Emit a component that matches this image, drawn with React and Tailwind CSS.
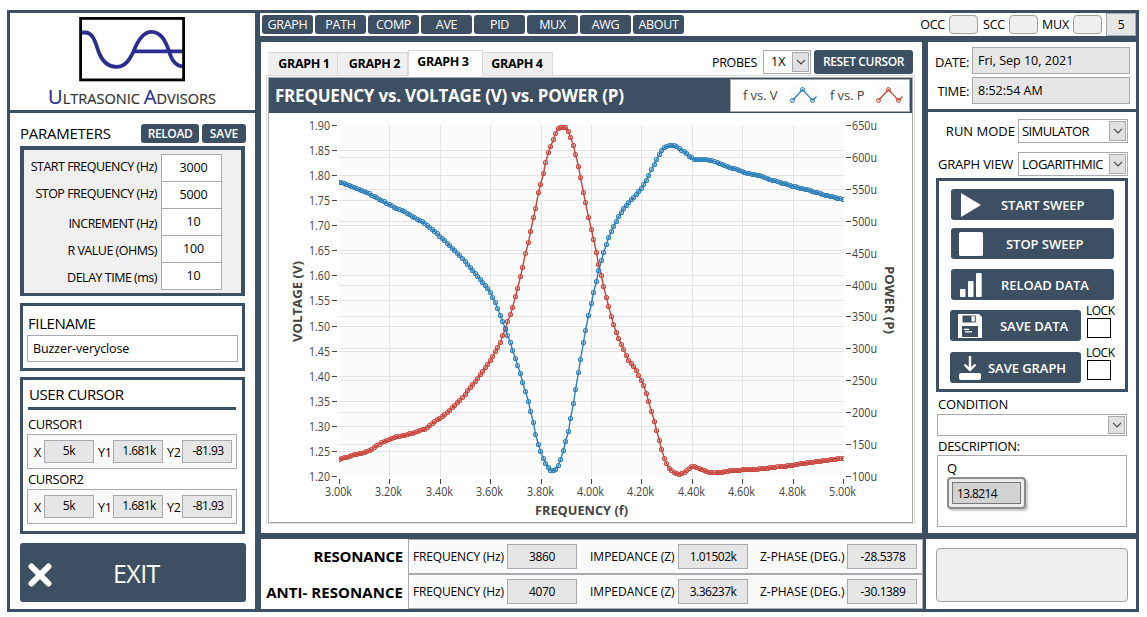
import React, { useState } from 'react';

const BLUE = '#2f80b8';
const RED = '#c9483f';

// Curve outlines in chart coordinates, resampled every 10 Hz below
const voltageCurve = [
  [339, 182], [350, 186], [367, 192.5], [381, 200], [390, 205], [403, 211], [415, 218], [424, 223],
  [433, 230], [447, 243], [460, 256], [470, 267], [480, 279], [490, 292], [497, 306], [505, 328],
  [511, 344], [516, 360], [520, 372], [528, 401], [533, 422], [536.7, 440], [541, 453], [545, 463], [549, 469],
  [552, 471], [556, 469], [560, 462], [563, 452], [566, 441], [568.7, 430], [571.3, 416], [573.7, 402],
  [576.3, 387], [578.5, 372], [581.5, 356], [583.5, 342], [586.5, 328], [588.5, 315], [591.5, 301],
  [594.3, 289], [596.5, 279], [599.3, 268], [601.5, 259], [604.3, 251], [606.5, 243], [609.3, 236],
  [612, 230], [617, 220], [622, 211], [627, 204], [632, 199], [641, 189.5], [646, 181], [651, 171],
  [656, 160], [660, 152.5], [664, 148], [669, 145.3], [674, 145.3], [680, 149], [686, 153], [690, 157],
  [694, 159], [706, 159], [718, 163], [732, 168], [745, 172.5], [760, 176], [775, 181], [792, 186],
  [812, 191], [825, 195], [843, 199.5],
];

const powerCurve = [
  [339, 459.5], [350, 456], [362, 453], [371, 449.5], [381, 443], [392, 438], [405, 435], [415, 432.5],
  [425, 429], [430, 425], [440, 418], [450, 410], [460, 400], [470, 388], [480, 375], [490, 361],
  [500, 343], [505, 330], [510, 315], [513.5, 306], [515.5, 296], [518.5, 287], [520.5, 276.5],
  [523.5, 265.5], [525.5, 253], [528.3, 241], [531.5, 228], [533.3, 216], [536.7, 204], [538, 192.5],
  [541.5, 181.5], [543.7, 170.5], [546, 161.5], [548, 152.5], [551.5, 144.5], [553.7, 138.5], [556, 132.5],
  [558.5, 128.5], [561, 127], [563.5, 127], [566, 128], [568.5, 132], [571.5, 139], [573.7, 146.5],
  [576.3, 156.3], [578.5, 167.5], [581.3, 179], [583.5, 192.5], [586.5, 204.5], [588.5, 217.5],
  [591.5, 231.5], [594.5, 243.5], [596.5, 255.5], [599.5, 268], [601.5, 278], [604.3, 289], [606.5, 299.5],
  [609.5, 309.5], [611.5, 318], [614.5, 326.5], [616.5, 333.5], [619.5, 340.5], [626.5, 355.5],
  [629.5, 361.5], [634.5, 367.5], [639.5, 376.5], [644.5, 386.5], [649.5, 403.5], [651.5, 411.5],
  [654.5, 423.5], [657.5, 434.5], [662.5, 452.5], [664.5, 459.5], [668.5, 467.5], [673.5, 472.5],
  [678.5, 474.5], [683.5, 472.5], [687.5, 470], [692, 466.3], [696, 466.5], [700, 469], [705, 471],
  [708.5, 472], [723.5, 472], [732, 470.5], [758.5, 469], [773.5, 467.5], [793, 465], [817, 461.5], [843, 458],
];

const resample = (curve) => {
  const points = [];
  let seg = 0;
  for (let i = 0; i <= 200; i++) {
    const x = 339 + i * 2.52;
    while (seg < curve.length - 2 && curve[seg + 1][0] < x) seg++;
    const [x0, y0] = curve[seg];
    const [x1, y1] = curve[seg + 1];
    const y = y0 + ((x - x0) / (x1 - x0)) * (y1 - y0);
    points.push([Math.floor(x) + 0.5, Math.floor(y) + 0.5]);
  }
  return points;
};

const Trace = ({ curve, color }) => {
  const points = resample(curve);
  return (
    <g fill="none" stroke={color} clipPath="url(#plot)">
      <polyline points={points.map((p) => p.join(',')).join(' ')} strokeWidth="1.4" />
      {points.map(([x, y], i) => (
        <circle key={i} cx={x} cy={y} r="2" strokeWidth="1.2" />
      ))}
    </g>
  );
};

const Chart = () => {
  const volts = Array.from({ length: 15 }, (_, i) => (1.9 - i * 0.05).toFixed(2));
  const powers = Array.from({ length: 12 }, (_, i) => `${650 - i * 50}u`);
  const freqs = Array.from({ length: 11 }, (_, i) => `${(3 + i * 0.2).toFixed(2)}k`);
  const voltY = (i) => Math.round(125 + i * 25.07) + 0.5;
  const powerY = (i) => Math.round(125 + i * 31.9) + 0.5;
  const freqX = (i) => Math.round(339 + i * 50.4) + 0.5;

  return (
    <svg width="642" height="408" viewBox="269 113 642 408" fontFamily="'Open Sans', sans-serif" fontSize="12" fill="#444">
      <clipPath id="plot">
        <rect x="339" y="125" width="505" height="352" />
      </clipPath>
      <rect x="339" y="125" width="505" height="352" fill="#fcfcfc" />
      <g stroke="#e4e4e4">
        {volts.map((v, i) => i > 0 && i < 14 && <line key={v} x1="339" x2="844" y1={voltY(i)} y2={voltY(i)} />)}
        {powers.map((v, i) => i > 0 && i < 11 && <line key={v} x1="339" x2="844" y1={powerY(i)} y2={powerY(i)} />)}
        {freqs.map((v, i) => i > 0 && i < 10 && <line key={v} y1="125" y2="477" x1={freqX(i)} x2={freqX(i)} />)}
      </g>
      <g stroke="#444">
        {volts.map((v, i) => <line key={v} x1="332" x2="337" y1={voltY(i)} y2={voltY(i)} />)}
        {powers.map((v, i) => <line key={v} x1="846" x2="851" y1={powerY(i)} y2={powerY(i)} />)}
        {freqs.map((v, i) => <line key={v} y1="479" y2="484" x1={freqX(i)} x2={freqX(i)} />)}
      </g>
      {volts.map((v, i) => (
        <text key={v} x="309" y={voltY(i) + 4.5} textLength="21" lengthAdjust="spacingAndGlyphs">{v}</text>
      ))}
      {powers.map((v, i) => (
        <text key={v} x="852" y={powerY(i) + 4.5} textLength="25" lengthAdjust="spacingAndGlyphs">{v}</text>
      ))}
      {freqs.map((v, i) => (
        <text key={v} x={freqX(i) - 14.5} y="496" textLength="27" lengthAdjust="spacingAndGlyphs">{v}</text>
      ))}
      <g fontWeight="700" fontSize="13">
        <text x="535" y="515" textLength="93" lengthAdjust="spacingAndGlyphs">FREQUENCY (f)</text>
        <text transform="translate(302 342) rotate(-90)" textLength="81" lengthAdjust="spacingAndGlyphs">VOLTAGE (V)</text>
        <text transform="translate(885 266) rotate(90)" textLength="68" lengthAdjust="spacingAndGlyphs">POWER (P)</text>
      </g>
      <Trace curve={powerCurve} color={RED} />
      <Trace curve={voltageCurve} color={BLUE} />
    </svg>
  );
};

const Logo = () => (
  <svg width="245" height="97" viewBox="10 13 245 97" fontFamily="'Open Sans', sans-serif">
    <g fill="none" stroke="#2b2d8f" strokeWidth="3.8">
      <path d="M82 32.5H85C93 32.5 95 41 98.5 51.5C102 61 108 66.8 116.5 66.8C125 66.8 129.5 60 133.5 51.5C137.5 41 143 31.8 151.5 31.8C161 31.8 165.5 41 169 51C171.5 60 175 66.3 183 66.3" />
      <path d="M133 51.3H183" />
    </g>
    <rect x="80.6" y="18.4" width="103" height="61.5" fill="none" stroke="#000" strokeWidth="2.8" />
    <text x="48" y="103.5" textLength="168" lengthAdjust="spacingAndGlyphs" fontSize="14.5" fill="#333" stroke="#333" strokeWidth="0.2">
      <tspan fontSize="20" fill="#2b2d8f" stroke="#2b2d8f">U</tspan>LTRASONIC <tspan fontSize="20" fill="#2b2d8f" stroke="#2b2d8f">A</tspan>DVISORS
    </text>
  </svg>
);

const LegendMark = ({ color }) => (
  <svg width="28" height="20" viewBox="0 0 28 20" fill="none" stroke={color}>
    <rect width="28" height="20" fill="#fcfcfc" stroke="none" />
    <path d="M2.5 14.5L12.5 3.5L22.5 14.5L26.5 10.5" strokeWidth="1.2" />
    <circle cx="2.5" cy="14.5" r="2" />
    <circle cx="12.5" cy="3.5" r="2" />
    <circle cx="22.5" cy="14.5" r="2" />
  </svg>
);

const Select = ({ value, className }) => (
  <div className={`flex items-center justify-between border border-[#a9a9b0] bg-white py-px pr-px ${className}`}>
    <span className="pt-px">{value}</span>
    <span className="flex h-full w-[17px] shrink-0 items-center justify-center border border-[#a9a9b0] bg-[#e1e1e1]">
      <svg width="10" height="6" viewBox="0 0 10 6" fill="none" stroke="#444" strokeWidth="1.2">
        <path d="M1 .8L5 4.8L9 .8" />
      </svg>
    </span>
  </div>
);

const Field = ({ value, className }) => (
  <div className={`flex items-center justify-center border border-[#a9a9b0] bg-[#e6e6e6] ${className}`}>{value}</div>
);

const btn = 'flex items-center rounded-[3px] bg-[#3d4f63] text-white';

const parameters = [
  { label: 'START FREQUENCY (Hz)', value: '3000', shift: 'pt-0' },
  { label: 'STOP FREQUENCY (Hz)', value: '5000', shift: 'pt-0' },
  { label: 'INCREMENT (Hz)', value: '10', shift: 'pt-[3px]' },
  { label: 'R VALUE (OHMS)', value: '100', shift: 'pt-[3px]' },
  { label: 'DELAY TIME (ms)', value: '10', shift: 'pt-[3px]' },
];

const CursorRow = ({ name, className }) => (
  <div className={className}>
    <div className="ml-px h-5 text-[13px] leading-[20px] tracking-[-0.4px]">{name}</div>
    <div className="flex h-[35px] w-[210px] items-center border border-[#a9a9b0] bg-[#fafafa] text-[12px]">
      <span className="w-4 pt-[3px] pl-1.5 text-[12.5px]">X</span>
      <Field value="5k" className="h-[23px] w-[50px] pb-px tracking-[-0.4px]" />
      <span className="w-[19px] pt-[3px] pl-1 text-[12.5px] tracking-[-0.3px]">Y1</span>
      <Field value="1.681k" className="h-[23px] w-[50px] pb-px pl-0.5 tracking-[-0.6px]" />
      <span className="w-[19px] pt-[3px] pl-1 text-[12.5px] tracking-[-0.3px]">Y2</span>
      <Field value="-81.93" className="h-[23px] w-[50px] pb-px pl-0.5 tracking-[-0.6px]" />
    </div>
  </div>
);

const Sidebar = () => (
  <div className="flex w-[245px] flex-col gap-[3px]">
    <div className="h-[97px] bg-white">
      <Logo />
    </div>
    <div className="h-[496px] bg-white pl-[10px]">
      <div className="flex h-[33px] items-end pb-[3px]">
        <span className="w-[121px] text-[15px] leading-[19px] tracking-[-0.25px]">PARAMETERS</span>
        <button className={`${btn} h-[19px] w-[58px] justify-center pt-px text-[12px] font-semibold tracking-[-0.4px]`}>RELOAD</button>
        <button className={`${btn} ml-[3px] h-[19px] w-11 justify-center pt-px text-[12px] font-semibold tracking-[-0.1px]`}>SAVE</button>
      </div>
      <div className="h-[150px] w-[225px] border-4 border-b-[3px] border-[#3d4f63] bg-[#f0f0f0] pt-1">
        {parameters.map((p) => (
          <div key={p.label} className="flex h-[27px]">
            <span className={`w-[133px] text-right text-[12.5px] leading-[25px] tracking-[-0.5px] whitespace-nowrap ${p.shift}`}>{p.label}</span>
            <span className="ml-1 flex h-7 w-[61px] items-center justify-center border border-[#a9a9b0] bg-white pl-1 text-[12.5px] tracking-[-0.1px]">
              {p.value}
            </span>
          </div>
        ))}
      </div>
      <div className="mt-[7px] h-[68px] w-[225px] border-[3px] border-[#3d4f63] pt-[6px] pl-1">
        <div className="ml-px h-[23px] text-[15px] leading-[23px] tracking-[-0.4px]">FILENAME</div>
        <div className="flex h-[27px] w-[211px] items-center border border-[#a9a9b0] pt-0.5 pl-[5px] text-[12.5px] tracking-[-0.1px]">
          Buzzer-veryclose
        </div>
      </div>
      <div className="mt-[6px] h-[157px] w-[225px] border-[3px] border-[#3d4f63] pl-1">
        <div className="ml-0.5 h-[27px] pt-[3px] text-[15px] leading-[23px] tracking-[-0.45px]">USER CURSOR</div>
        <div className="ml-px h-[3px] w-[208px] bg-[#3d4f63]" />
        <CursorRow name="CURSOR1" className="mt-1" />
        <CursorRow name="CURSOR2" className="" />
      </div>
      <button className={`${btn} mt-[9px] h-[59px] w-[226px] pl-2 text-[25px] tracking-[-0.6px]`}>
        <svg width="24" height="24" viewBox="0 0 24 24" className="mt-1" stroke="#fff" strokeWidth="6" strokeLinecap="round">
          <path d="M3.5 3.5L20.5 20.5M20.5 3.5L3.5 20.5" />
        </svg>
        <span className="ml-[61px] pt-0.5">EXIT</span>
      </button>
    </div>
  </div>
);

const menu = ['GRAPH', 'PATH', 'COMP', 'AVE', 'PID', 'MUX', 'AWG', 'ABOUT'];

const lamps = [
  { name: 'OCC', width: 'w-[31px]' },
  { name: 'SCC', width: 'w-[31px]' },
  { name: 'MUX', width: 'w-[35px]' },
];

const TopBar = () => (
  <div className="flex h-[23px] items-center bg-white pl-0.5 text-[12.5px] tracking-[-0.3px]">
    <div className="flex gap-0.5">
      {menu.map((m) => (
        <button key={m} className={`${btn} h-[19px] w-[51px] justify-center pt-px font-medium`}>{m}</button>
      ))}
    </div>
    <div className="ml-auto flex h-full items-center text-[12.5px]">
      {lamps.map((l) => (
        <div key={l.name} className="flex items-center">
          <span className={`pt-px pr-1 text-right tracking-[-0.2px] ${l.width}`}>{l.name}</span>
          <span className="h-[19px] w-[29px] rounded border border-[#a0a0a0] bg-[#efefef]" />
        </div>
      ))}
      <Field value="5" className="ml-1 h-[23px] w-[30px] text-[12px]" />
    </div>
  </div>
);

const tabs = [
  { name: 'GRAPH 1', pad: 'pl-[3px]' },
  { name: 'GRAPH 2', pad: 'pl-1' },
  { name: 'GRAPH 3', pad: 'pr-[5px]' },
  { name: 'GRAPH 4', pad: 'pr-px' },
];

const GraphPanel = () => {
  const [tab, setTab] = useState(2);
  return (
    <div className="h-[491px] w-[661px] bg-white pl-[5px]">
      <div className="flex h-[34px] items-end pl-0.5 text-[12.5px]">
        {tabs.map((t, i) => (
          <button
            key={t.name}
            onClick={() => setTab(i)}
            className={`${t.pad} border border-b-0 border-[#d9d9d9] font-bold tracking-[-0.35px] ${
              i === tab ? 'relative h-[26px] w-[75px] bg-white pb-[3px]' : 'mb-px h-[23px] w-[70px] border-l-0 bg-[#efefef]'
            }`}
          >
            {t.name}
          </button>
        ))}
        <div className="ml-auto mr-[9px] flex h-[26px] items-start">
          <span className="mr-1.5 leading-[26px] tracking-[-0.3px]">PROBES</span>
          <Select value="1X" className="h-6 w-12 pl-[7px]" />
          <button className={`${btn} ml-[3px] h-6 w-[99px] justify-center text-[12px] font-semibold tracking-[-0.35px]`}>RESET CURSOR</button>
        </div>
      </div>
      <div className="-mt-px h-[449px] w-[649px] border border-[#d9d9d9] p-px">
        <div className="h-[446px] w-[645px] border border-[#a9a9b0]">
          <div className="flex h-[35px] items-center justify-between bg-[#3d4f63] pl-[6px] pr-0.5">
            <span className="pt-px text-[17px] font-bold tracking-[-0.22px] text-white">FREQUENCY vs. VOLTAGE (V) vs. POWER (P)</span>
            <div className="flex h-[33px] w-[180px] items-center border border-[#a9a9b0] bg-white pl-3 text-[13px] text-[#444]">
              <span className="w-[47px] pt-px tracking-[-0.1px]">f vs. V</span>
              <LegendMark color={BLUE} />
              <span className="ml-3 w-[46px] pt-px tracking-[-0.1px]">f vs. P</span>
              <LegendMark color={RED} />
            </div>
          </div>
          <Chart />
        </div>
      </div>
    </div>
  );
};

const icons = {
  play: <path d="M2 0L22 12L2 24Z" />,
  stop: <rect width="24" height="24" rx="1.5" />,
  bars: (
    <>
      <rect x="1" y="16" width="5.5" height="8" rx=".8" />
      <rect x="9" y="8" width="5.5" height="16" rx=".8" />
      <rect x="17" y="0" width="5.7" height="24" rx=".8" />
    </>
  ),
  disk: (
    <>
      <path fillRule="evenodd" d="M0 0H21L24 3V24H0ZM4.5 1.5V8.5H17.8V1.5ZM4 12V23H20V12Z" />
      <path d="M13.5 2.3h3.3v5.2h-3.3zM6 14.8h5v1.2H6zM7 17.2h7v1.2H7z" />
    </>
  ),
  download: (
    <>
      <path d="M12 0V14M6.5 8.5L12 14L17.5 8.5" fill="none" stroke="#fff" strokeWidth="2.4" />
      <rect x="1" y="17" width="22" height="7" rx="2" />
    </>
  ),
};

const SweepButton = ({ icon, label, className, textClass }) => (
  <button className={`${btn} h-[31px] pl-2 text-[13px] font-semibold tracking-[-0.05px] ${className}`}>
    <svg width="24" height="24" viewBox="0 0 24 24" fill="#fff">{icons[icon]}</svg>
    <span className={`pt-0.5 whitespace-nowrap ${textClass}`}>{label}</span>
  </button>
);

const LockBox = () => (
  <div className="ml-[5px] -mt-[7px] w-7 text-[12px] leading-[15px] tracking-[-0.5px]">
    LOCK
    <div className="ml-px h-5 w-6 border border-black" />
  </div>
);

const ControlPanel = () => (
  <div className="flex w-[208px] flex-col gap-[3px]">
    <div className="flex h-[67px] flex-col gap-[3px] bg-white pt-[5px] text-[12.5px]">
      <div className="flex items-center">
        <span className="w-[41px] pt-1 text-right text-[13px] tracking-[-0.3px]">DATE:</span>
        <div className="ml-[3px] flex h-[27px] w-[158px] items-center border border-[#a9a9b0] bg-[#e6e6e6] pt-0.5 pl-[5px]">Fri, Sep 10, 2021</div>
      </div>
      <div className="flex items-center">
        <span className="w-[41px] pt-0.5 text-right text-[13px] tracking-[-0.3px]">TIME:</span>
        <div className="ml-[3px] flex h-[27px] w-[158px] items-center border border-[#a9a9b0] bg-[#e6e6e6] pt-0.5 pl-[5px]">8:52:54 AM</div>
      </div>
    </div>
    <div className="h-[421px] bg-white pt-[7px] pl-2 text-[13px] tracking-[-0.2px]">
      <div className="flex items-center">
        <span className="w-[79px] pt-px text-right tracking-[0px]">RUN MODE</span>
        <Select value="SIMULATOR" className="ml-[3px] h-6 w-[110px] pl-[3px] tracking-[-0.6px]" />
      </div>
      <div className="mt-[9px] flex items-center">
        <span className="w-[77px] pt-px text-right">GRAPH VIEW</span>
        <Select value="LOGARITHMIC" className="ml-[5px] h-6 w-[110px] pl-[3px] tracking-[-0.5px]" />
      </div>
      <div className="mt-0.5 h-[214px] w-48 border-[3px] border-[#3d4f63] pt-2 pl-[11px]">
        <SweepButton icon="play" label="START SWEEP" className="ml-px w-[163px]" textClass="ml-[18px]" />
        <SweepButton icon="stop" label="STOP SWEEP" className="mt-2 ml-px w-[163px]" textClass="ml-[23px]" />
        <SweepButton icon="bars" label="RELOAD DATA" className="mt-[10px] ml-px w-[163px]" textClass="ml-[18px]" />
        <div className="mt-[10px] flex">
          <SweepButton icon="disk" label="SAVE DATA" className="w-[131px]" textClass="ml-[18px]" />
          <LockBox />
        </div>
        <div className="mt-[11px] flex">
          <SweepButton icon="download" label="SAVE GRAPH" className="w-[131px]" textClass="ml-[6px]" />
          <LockBox />
        </div>
      </div>
      <div className="ml-0.5 h-[22px] leading-[24px]">CONDITION</div>
      <Select value="" className="ml-px h-[22px] w-[190px]" />
      <div className="ml-0.5 h-[19px] leading-[20px] tracking-[-0.3px]">DESCRIPTION:</div>
      <div className="ml-px h-[72px] w-[190px] border border-[#a9a9b0] pl-[9px]">
        <div className="h-[21px] leading-[24px]">Q</div>
        <div className="h-8 w-[79px] rounded border-2 border-[#8c8c8c] bg-[#ececec] p-[3px] shadow-[2px_2px_2px_#c8c8c8]">
          <div className="flex h-[22px] items-center border border-[#777] bg-[#d2d2d2] pt-px pl-1 text-[12px] tracking-[-0.6px]">13.8214</div>
        </div>
      </div>
    </div>
  </div>
);

const results = [
  { name: 'RESONANCE', frequency: '3860', impedance: '1.01502k', phase: '-28.5378', tracking: 'tracking-[-0.2px]' },
  { name: 'ANTI- RESONANCE', frequency: '4070', impedance: '3.36237k', phase: '-30.1389', tracking: 'pt-0.5 tracking-[0.05px]' },
];

const Results = () => (
  <div className="h-[70px] w-[662px] bg-white">
    {results.map((r) => (
      <div key={r.name} className="flex h-[35px] items-center text-[12px]">
        <span className={`w-[142px] text-right text-[15px] font-bold whitespace-nowrap ${r.tracking}`}>{r.name}</span>
        <div className="ml-[5px] flex h-[35px] flex-1 items-center border border-[#a9a9b0] bg-[#fafafa]">
          <span className="w-[98px] pl-1 tracking-[-0.15px] whitespace-nowrap">FREQUENCY (Hz)</span>
          <Field value={r.frequency} className="h-[25px] w-[70px] tracking-[-0.4px]" />
          <span className="w-[101px] pl-[13px] whitespace-nowrap">IMPEDANCE (Z)</span>
          <Field value={r.impedance} className="h-[25px] w-[70px] tracking-[-0.5px]" />
          <span className="w-[99px] pl-3 tracking-[-0.05px] whitespace-nowrap">Z-PHASE (DEG.)</span>
          <Field value={r.phase} className="h-[25px] w-[70px] pl-0.5 tracking-[-0.4px]" />
        </div>
      </div>
    ))}
  </div>
);

const App = () => {
  return (
    <div className="h-[617px] w-[1147px] overflow-hidden bg-white pt-[10px] pl-[7px] font-['Open_Sans',sans-serif] text-black">
      <div className="flex h-[602px] w-[1132px] gap-[5px] bg-[#3d4f63] p-[3px]">
        <Sidebar />
        <div className="flex w-[876px] flex-col gap-[6px]">
          <TopBar />
          <div className="flex gap-[6px] pl-px">
            <GraphPanel />
            <ControlPanel />
          </div>
          <div className="flex gap-[3px] pl-px">
            <Results />
            <div className="h-[70px] w-[210px] bg-white pt-[9px] pl-[10px]">
              <div className="h-[54px] w-48 rounded border border-[#a0a0a0] bg-[#efefef]" />
            </div>
          </div>
        </div>
      </div>
    </div>
  );
};

export default App;
